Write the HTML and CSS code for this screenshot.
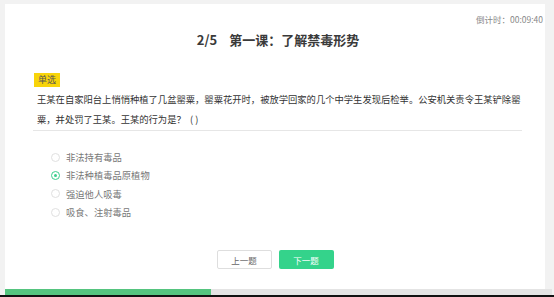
FILE: index.html
```html
<!DOCTYPE html>
<html lang="zh-CN">
<head>
    <meta charset="UTF-8">
    <meta name="viewport" content="width=device-width, initial-scale=1.0">
    <title>禁毒课程答题</title>
    <link rel="stylesheet" href="styles.css">
</head>
<body>
    <div class="page">
        <!-- Question card -->
        <div class="card">
            <div class="timer">倒计时：00:09:40</div>
            <h1 class="title"><span class="step">2/5</span>第一课：了解禁毒形势</h1>

            <div class="question">
                <div class="tag">单选</div>
                <p class="stem">王某在自家阳台上悄悄种植了几盆罂粟，罂粟花开时，被放学回家的几个中学生发现后检举。公安机关责令王某铲除罂粟，并处罚了王某。王某的行为是？&nbsp;&nbsp;( )</p>
            </div>

            <ul class="options">
                <li class="option"><span class="radio"></span>非法持有毒品</li>
                <li class="option checked"><span class="radio"></span>非法种植毒品原植物</li>
                <li class="option"><span class="radio"></span>强迫他人吸毒</li>
                <li class="option"><span class="radio"></span>吸食、注射毒品</li>
            </ul>

            <div class="actions">
                <button class="btn btn-prev">上一题</button>
                <button class="btn btn-next">下一题</button>
            </div>
        </div>

        <!-- Progress -->
        <div class="progress">
            <div class="progress-fill" style="width: 206px"></div>
        </div>
        <div class="bottom-edge"></div>
    </div>
</body>
</html>
```

FILE: styles.css
```css
body {
    margin: 0;
    background-color: #f2f2f2;
    font-family: "Noto Sans CJK SC", "Noto Sans", sans-serif;
    height: 297px;
    overflow: hidden;
}
.page {
    display: flex;
    flex-direction: column;
    height: 297px;
}

/* Card */
.card {
    flex: 1;
    margin: 4px 9px 0 5px;
    background-color: white;
    padding-top: 9px;
    display: flex;
    flex-direction: column;
}
.timer {
    text-align: right;
    padding-right: 2px;
    font-size: 8.5px;
    line-height: 12px;
    color: #888;
}
.title {
    margin: 6px 0 0 0;
    padding-left: 6px;
    text-align: center;
    font-size: 13px;
    line-height: 18px;
    font-weight: bold;
    color: #3a3a3a;
}
.step {
    margin-right: 12px;
}

/* Question */
.question {
    margin: 24px 0 0 28px;
    width: 489px;
    border-bottom: 1px solid #e6e6e6;
}
.tag {
    width: fit-content;
    background-color: #f8d40a;
    color: #555;
    font-size: 9px;
    line-height: 14px;
    padding: 0 4px;
    margin-left: 1px;
}
.stem {
    margin: 2px 0 0 0;
    padding: 0 0 1px 4px;
    font-size: 9.3px;
    line-height: 20px;
    color: #333;
}

/* Options */
.options {
    list-style: none;
    margin: 17px 0 0 0;
    padding: 0 0 0 46px;
}
.option {
    display: flex;
    align-items: center;
    height: 18.3px;
    font-size: 9.3px;
    color: #777;
}
.radio {
    width: 7px;
    height: 7px;
    border: 1px solid #e0e0e0;
    border-radius: 50%;
    margin-right: 6px;
    box-sizing: content-box;
    display: flex;
    align-items: center;
    justify-content: center;
}
.option.checked .radio {
    border-color: #3ccf8e;
}
.option.checked .radio::after {
    content: "";
    width: 3px;
    height: 3px;
    border-radius: 50%;
    background-color: #3ccf8e;
}

/* Buttons */
.actions {
    display: flex;
    justify-content: center;
    gap: 7px;
    margin-top: 29px;
}
.btn {
    width: 55px;
    height: 19px;
    font-family: inherit;
    font-size: 8.5px;
    border-radius: 2px;
    padding: 0;
    cursor: pointer;
}
.btn-prev {
    background-color: white;
    border: 1px solid #dedede;
    color: #666;
}
.btn-next {
    background-color: #34d38b;
    border: none;
    color: white;
}

/* Progress bar */
.progress {
    height: 6px;
    margin: 0 2px 0 5px;
    background-color: #e4e4e4;
}
.progress-fill {
    height: 100%;
    background-color: #55c47f;
}
.bottom-edge {
    height: 2px;
    background-color: #111;
}
```
